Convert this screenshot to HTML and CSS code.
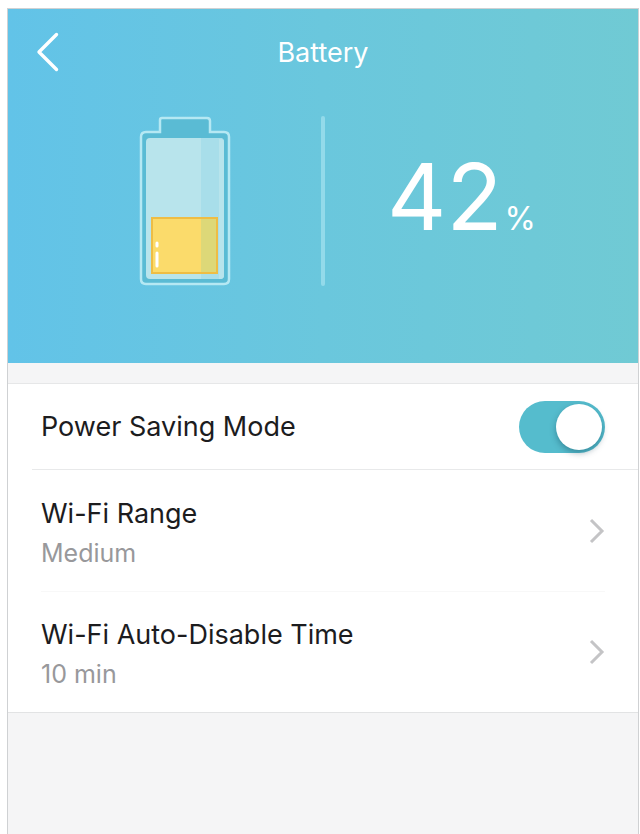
FILE: index.html
```html
<!DOCTYPE html>
<html lang="en">
<head>
    <meta charset="UTF-8" />
    <meta name="viewport" content="width=device-width, initial-scale=1.0" />
    <title>Battery</title>
    <link rel="stylesheet" href="styles.css">
</head>
<body>
    <div class="screen">
        <!-- Battery status -->
        <header class="hero">
            <div class="title-bar">
                <button class="back-button" type="button" aria-label="Back">
                    <svg width="24" height="40" viewBox="0 0 24 40" fill="none" stroke="#fff" stroke-width="3.4" stroke-linecap="round" stroke-linejoin="round">
                        <path d="M20.5 2.5 L3 20 L20.5 37.5" />
                    </svg>
                </button>
                <h1>Battery</h1>
            </div>
            <div class="status">
                <svg class="battery" width="92" height="170" viewBox="0 0 92 170" aria-hidden="true">
                    <path d="M21 4 Q21 2 23 2 H68 Q71 2 71 5 V16 H85 Q90 16 90 21 V163 Q90 168 85 168 H7 Q2 168 2 163 V21 Q2 16 7 16 H21 Z" fill="#5abbd4" stroke="#b5e8f3" stroke-width="2.5" />
                    <rect x="7" y="22" width="78" height="141" rx="4" fill="#b8e4ec" />
                    <path d="M62 22 H81 Q85 22 85 26 V159 Q85 163 81 163 H62 Z" fill="#a8deea" />
                    <path d="M80 23 H81 Q85 23 85 26 V159 Q85 163 81 163 H80 Z" fill="#b8e4ec" />
                    <rect x="13" y="102" width="65" height="55" fill="#fbdb6b" />
                    <rect x="62" y="102" width="16" height="55" fill="#ddd878" />
                    <rect x="13" y="102" width="65" height="55" fill="none" stroke="#eebd45" stroke-width="2" />
                    <path d="M18 127 V130 M18 137 V150" stroke="#fff" stroke-width="3" stroke-linecap="round" />
                </svg>
                <div class="divider"></div>
                <p class="level">42<span>%</span></p>
            </div>
        </header>

        <!-- Settings -->
        <main class="settings">
            <label class="row row-switch">
                <span class="name">Power Saving Mode</span>
                <input class="switch" type="checkbox" role="switch" checked>
            </label>
            <a class="row row-link" href="#">
                <span class="text">
                    <span class="name">Wi-Fi Range</span>
                    <span class="value">Medium</span>
                </span>
                <svg class="chevron" width="16" height="26" viewBox="0 0 16 26" fill="none" stroke="#c4c4c6" stroke-width="3">
                    <path d="M2 2 L13 13 L2 24" />
                </svg>
            </a>
            <a class="row row-link" href="#">
                <span class="text">
                    <span class="name">Wi-Fi Auto-Disable Time</span>
                    <span class="value">10 min</span>
                </span>
                <svg class="chevron" width="16" height="26" viewBox="0 0 16 26" fill="none" stroke="#c4c4c6" stroke-width="3">
                    <path d="M2 2 L13 13 L2 24" />
                </svg>
            </a>
        </main>
    </div>
</body>
</html>
```
FILE: styles.css
```css
* {
    box-sizing: border-box;
}

body {
    margin: 0;
    background: #fff;
    color: #1c1c1e;
    font-family: Inter, "Liberation Sans", sans-serif;
}

.screen {
    min-height: calc(100vh - 8px);
    margin: 8px 1px 0 7px;
    border: 1px solid #cfd1d3;
    border-bottom: none;
    background: #f5f5f6;
}

/* Battery status */
.hero {
    padding-bottom: 77px;
    background: linear-gradient(90deg, #62c3e8, #6ac7dd 50%, #70cad4);
    color: #fff;
}

.title-bar {
    display: grid;
    grid-template-columns: 80px 1fr 80px;
    align-items: center;
    height: 86px;
}

.title-bar h1 {
    margin: 0;
    font-size: 27px;
    font-weight: 400;
    text-align: center;
}

.back-button {
    display: flex;
    justify-content: center;
    padding: 0;
    border: none;
    background: none;
    cursor: pointer;
}

.status {
    display: grid;
    grid-template-columns: 1fr 4px 1fr;
    align-items: center;
    justify-items: center;
    margin-top: 21px;
    padding: 0 40px;
}

.battery {
    display: block;
}

.divider {
    width: 4px;
    height: 170px;
    border-radius: 2px;
    background: #93daea;
}

.level {
    margin: 0;
    padding-top: 14px;
    font-size: 92px;
    line-height: 92px;
}

.level span {
    margin-left: 2px;
    font-size: 32px;
}

/* Settings list */
.settings {
    margin-top: 20px;
    border-top: 1px solid #e6e7e8;
    border-bottom: 1px solid #e2e3e4;
    background: #fff;
}

.row {
    display: flex;
    align-items: center;
    justify-content: space-between;
    color: inherit;
    text-decoration: none;
    cursor: pointer;
}

.row-switch {
    height: 86px;
    margin-left: 24px;
    padding: 0 33px 0 9px;
    border-bottom: 1px solid #e8e9ea;
}

.row-link {
    height: 121px;
    margin: 0 33px;
}

.row-link + .row-link {
    border-top: 1px solid #f8f8f8;
}

.text {
    display: flex;
    flex-direction: column;
    gap: 4px;
    padding-top: 4px;
}

.name {
    font-size: 27px;
    line-height: 36px;
}

.value {
    color: #98989b;
    font-size: 25px;
    line-height: 34px;
}

.switch {
    appearance: none;
    display: flex;
    width: 86px;
    height: 52px;
    margin: 0;
    padding: 3px;
    border-radius: 26px;
    background: #55bccd;
    cursor: pointer;
}

.switch::before {
    content: "";
    width: 46px;
    height: 46px;
    border-radius: 50%;
    background: #fff;
    box-shadow: 0 3px 6px rgba(0, 50, 70, 0.35);
}

.switch:checked {
    justify-content: flex-end;
}

.switch:not(:checked) {
    background: #d5d6d8;
}
```
